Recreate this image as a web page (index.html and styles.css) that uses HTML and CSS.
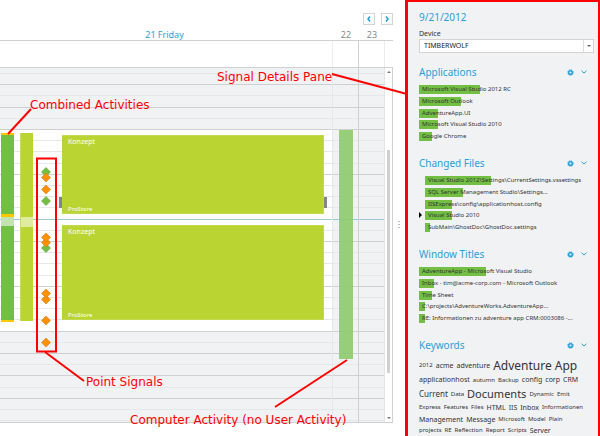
FILE: index.html
```html
<!DOCTYPE html>
<html lang="en">
<head>
<meta charset="utf-8">
<title>Activity calendar</title>
<link rel="stylesheet" href="styles.css">
</head>
<body>
<svg class="defs" width="0" height="0" aria-hidden="true">
  <symbol id="gear" viewBox="0 0 14 14">
    <circle cx="7" cy="7" r="3.6" fill="none" stroke="currentColor" stroke-width="3"/>
    <circle cx="7" cy="7" r="5.6" fill="none" stroke="currentColor" stroke-width="2" stroke-dasharray="2.2 2.2"/>
  </symbol>
  <symbol id="chevron" viewBox="0 0 6 4">
    <path d="M.5 .8 3 3 5.500 .8" fill="none" stroke="currentColor" stroke-width="1"/>
  </symbol>
</svg>
<div class="app">
  <main class="calendar">
    <nav class="pager">
      <button type="button" aria-label="Previous"><svg viewBox="0 0 4 6"><path d="M3 .5 1 3 3 5.500"/></svg></button>
      <button type="button" aria-label="Next"><svg viewBox="0 0 4 6"><path d="M1 .5 3 3 1 5.500"/></svg></button>
    </nav>
    <div class="days"><span class="today">21 Friday</span><span>22</span><span>23</span><i></i></div>
    <div class="allday"><i></i><i></i><i></i><i></i></div>
    <div class="timeline">
      <div class="board">
        <div class="hours">
          <i></i><i class="major"></i><i></i><i class="major"></i><i></i><i class="major"></i>
          <i class="work"></i><i class="work"></i><i class="work"></i><i class="work major"></i>
          <i class="work"></i><i class="work"></i><i class="work"></i><i class="work now"></i>
          <i class="work"></i><i class="work major"></i><i class="work"></i><i class="work"></i>
          <i class="work"></i><i class="work major"></i><i class="work"></i><i class="work"></i>
          <i class="work"></i><i class="work major"></i><i></i><i class="major"></i><i></i><i class="major"></i>
          <i></i><i class="major"></i><i></i><i></i>
        </div>
        <div class="columns"><i></i><i></i><i></i></div>
        <div class="track combined"><i class="edge"></i><i class="am"></i><i class="edge rest"></i><i class="pause"></i><i class="pm"></i><i class="edge"></i></div>
        <div class="track user"><i class="am"></i><i class="pause"></i><i class="pm"></i></div>
        <div class="event morning"><span>Konzept</span><small>ProStore</small></div>
        <div class="event afternoon"><span>Konzept</span><small>ProStore</small></div>
        <div class="handle start"></div>
        <div class="handle end"></div>
        <div class="computer"></div>
        <svg class="signals" viewBox="0 0 10 190" width="10" height="190">
          <g class="ok"><path d="M5 5.500 9.500 10 5 14.500 .5 10z"/><path d="M5 34.500 9.500 39 5 43.500 .5 39z"/><path d="M5 81.500 9.500 86 5 90.500 .5 86z"/></g>
          <g class="warn"><path d="M5 11 9.500 15.500 5 20 .5 15.500z"/><path d="M5 23 9.500 27.500 5 32 .5 27.500z"/><path d="M5 76 9.500 80.500 5 85 .5 80.500z"/><path d="M5 71 9.500 75.500 5 80 .5 75.500z"/><path d="M5 133 9.500 137.500 5 142 .5 137.500z"/><path d="M5 127 9.500 131.500 5 136 .5 131.500z"/><path d="M5 154 9.500 158.500 5 163 .5 158.500z"/><path d="M5 176 9.500 180.500 5 185 .5 180.500z"/></g>
        </svg>
      </div>
      <div class="scrollbar"><b class="up"></b><b class="thumb"></b><b class="down"></b></div>
    </div>
  </main>
  <div class="splitter"><i></i><i></i><i></i></div>
  <aside class="pane">
    <h1>9/21/2012</h1>
    <label for="device">Device</label>
    <div class="select"><select id="device"><option>TIMBERWOLF</option></select><b></b></div>
    <section>
      <header><h2>Applications</h2><button type="button" aria-label="Settings"><svg class="gear"><use href="#gear"/></svg></button><button type="button" aria-label="Collapse"><svg class="chevron"><use href="#chevron"/></svg></button></header>
      <ul>
        <li><b style="width:61px"></b><span>Microsoft Visual Studio 2012 RC</span></li>
        <li><b style="width:42px"></b><span>Microsoft Outlook</span></li>
        <li><b style="width:19px"></b><span>AdventureApp.UI</span></li>
        <li><b style="width:19px"></b><span>Microsoft Visual Studio 2010</span></li>
        <li><b style="width:13px"></b><span>Google Chrome</span></li>
      </ul>
    </section>
    <section>
      <header><h2>Changed Files</h2><button type="button" aria-label="Settings"><svg class="gear"><use href="#gear"/></svg></button><button type="button" aria-label="Collapse"><svg class="chevron"><use href="#chevron"/></svg></button></header>
      <ul class="tree">
        <li><b style="width:66px"></b><span>Visual Studio 2012\Settings\CurrentSettings.vssettings</span></li>
        <li><b style="width:38px"></b><span>SQL Server Management Studio\Settings...</span></li>
        <li><b style="width:27px"></b><span>IISExpress\config\applicationhost.config</span></li>
        <li class="closed"><b style="width:27px"></b><span>Visual Studio 2010</span></li>
        <li><b style="width:5px"></b><span>SubMain\GhostDoc\GhostDoc.settings</span></li>
      </ul>
    </section>
    <section>
      <header><h2>Window Titles</h2><button type="button" aria-label="Settings"><svg class="gear"><use href="#gear"/></svg></button><button type="button" aria-label="Collapse"><svg class="chevron"><use href="#chevron"/></svg></button></header>
      <ul>
        <li><b style="width:67px"></b><span>AdventureApp - Microsoft Visual Studio</span></li>
        <li><b style="width:15px"></b><span>Inbox - tim@acme-corp.com - Microsoft Outlook</span></li>
        <li><b style="width:13px"></b><span>Time Sheet</span></li>
        <li><b style="width:6px"></b><span>C:\projects\AdventureWorks.AdventureApp...</span></li>
        <li><b style="width:6px"></b><span>RE: Informationen zu adventure app CRM:0003086 -...</span></li>
      </ul>
    </section>
    <section>
      <header><h2>Keywords</h2><button type="button" aria-label="Settings"><svg class="gear"><use href="#gear"/></svg></button><button type="button" aria-label="Collapse"><svg class="chevron"><use href="#chevron"/></svg></button></header>
      <div class="cloud">
        <p><span>2012</span><span class="m">acme</span><span class="m">adventure</span><span class="xl">Adventure App</span></p>
        <p><span class="m">applicationhost</span><span>autumn</span><span>Backup</span><span class="m">config</span><span class="m">corp</span><span class="m">CRM</span></p>
        <p><span class="l">Current</span><span>Data</span><span class="xl2">Documents</span><span>Dynamic</span><span>Emit</span></p>
        <p><span>Express</span><span>Features</span><span>Files</span><span class="m">HTML</span><span class="m">IIS</span><span class="m">Inbox</span><span>Informationen</span></p>
        <p><span class="m">Management</span><span class="m">Message</span><span>Microsoft</span><span>Model</span><span>Plain</span></p>
        <p><span>projects</span><span>RE</span><span>Reflection</span><span>Report</span><span>Scripts</span><span class="m">Server</span></p>
      </div>
    </section>
  </aside>
  <svg class="callouts" width="600" height="436" viewBox="0 0 600 436" aria-hidden="true">
    <path d="M8 134 31 109M332 74 407 94M45 352 84 381M275 407 347 360"/>
    <rect x="37" y="158.500" width="19" height="193"/>
  </svg>
  <span class="note note-combined">Combined Activities</span>
  <span class="note note-pane">Signal Details Pane</span>
  <span class="note note-points">Point Signals</span>
  <span class="note note-computer">Computer Activity (no User Activity)</span>
</div>
</body>
</html>
```
FILE: styles.css
```css
* { box-sizing: border-box; }
body, h1, h2, ul, p { margin: 0; padding: 0; font-weight: normal; }
body { background: #fff; font-family: "Noto Sans", "Open Sans", sans-serif; font-size: 6px; color: #333; }
button { border: 0; padding: 0; background: none; color: #2a9fd6; display: flex; align-items: center; justify-content: center; }
.defs { position: absolute; }
.app { position: relative; display: grid; grid-template-columns: 1fr 12px 195px; min-height: 100vh; overflow: hidden; }

/* Calendar */
.calendar { display: flex; flex-direction: column; padding-top: 13px; border-bottom: 1px solid #ddd; min-width: 0; }
.pager { display: flex; justify-content: flex-end; gap: 6px; height: 12px; }
.pager button { width: 12px; height: 12px; border: 1px solid #d4d4d4; background: #fff; }
.pager svg { width: 4px; height: 6px; fill: none; stroke: #1f9bd4; stroke-width: 1.5; }
.days, .allday { display: grid; grid-template-columns: 1fr 26px 26px 8px; }
.days { height: 16px; padding-top: 4px; line-height: 11px; font-size: 9px; text-align: center; color: #888; border-bottom: 1px solid #d0d0d2; }
.days .today { color: #2a9fd6; padding-right: 4px; }
.allday { height: 26px; }
.allday i { border-right: 1px solid #ececee; }
.allday i:nth-child(2) { border-color: #d0d0d2; }
.allday i:last-child { border: 0; }
.timeline { display: grid; grid-template-columns: 1fr 7px; height: 356px; border: 1px solid #d0d0d2; border-left: 0; }
.board { position: relative; overflow: hidden; background: #f1f2f4; border-right: 1px solid #e4e4e6; }
.hours { display: grid; grid-template-rows: 6px; grid-auto-rows: 11px 11px 12px 11px 11px; height: 354px; overflow: hidden; }
.hours i { border-bottom: 1px solid #e6e7e9; }
.hours .work { background: linear-gradient(to left, #f1f2f4 52px, #fff 52px); }
.hours .major { border-color: #cfd0d2; }
.hours .now { border-color: #9cc9d6; }
.columns { position: absolute; inset: 0; display: grid; grid-template-columns: 1fr 26px 25px; }
.columns i { border-right: 1px solid #e6e7e9; }
.columns i:nth-child(2) { border-color: #cfd0d2; }
.columns i:last-child { border: 0; }
.track { position: absolute; top: 65px; width: 13px; display: flex; flex-direction: column; }
.combined { left: 1px; }
.combined .edge { height: 2px; background: #ffc800; }
.combined .rest { height: 3px; }
.am { height: 79px; }
.pm { height: 94px; }
.pause { height: 9px; }
.combined .am, .combined .pm { background: #72bf44; }
.combined .pause { background: #c3e3b2; }
.user { left: 20px; border-left: 1px solid #c6dc60; }
.user .am { height: 84px; }
.user .pause { height: 10px; }
.user .am, .user .pm { background: #bad532; }
.user .pause { background: #dfeba0; }
.event { position: absolute; left: 62px; right: 60px; display: flex; flex-direction: column; justify-content: space-between; padding: 0 6px; background: #bad532; border: 1px solid #c3da50; border-left: 0; color: #fff; line-height: 11px; font-size: 7px; }
.event small { font-size: 6px; line-height: 7px; }
.morning { top: 67px; height: 79px; }
.afternoon { top: 157px; height: 95px; }
.handle { position: absolute; top: 129px; width: 3px; height: 11px; background: #858585; }
.handle.start { left: 59px; }
.handle.end { right: 57px; }
.computer { position: absolute; top: 62px; right: 31px; width: 14px; height: 229px; background: #8ccb69; opacity: .9; }
.signals { position: absolute; left: 41px; top: 94px; }
.signals .ok { fill: #72bf44; stroke: #58a636; stroke-width: .6; }
.signals .warn { fill: #ff9100; stroke: #d27d10; stroke-width: .6; }
.scrollbar { display: flex; flex-direction: column; align-items: center; padding: 3px 0; }
.up { border: 2px solid transparent; border-top: 0; border-bottom-color: #777; }
.down { border: 2px solid transparent; border-bottom: 0; border-top-color: #777; margin-top: auto; }
.thumb { width: 3px; flex: none; margin-top: 77px; height: 223px; background: #d0d0d0; }
.splitter { display: flex; flex-direction: column; align-items: center; justify-content: center; gap: 2px; }
.splitter i { width: 2px; height: 1px; background: #bbb; }

/* Details pane */
.pane { border: 2px solid #f00; border-left-width: 3px; background: #f1f2f4; padding: 7px 4px 0 11px; min-width: 0; overflow: hidden; }
h1, h2 { font-size: 10px; color: #2a9fd6; }
h1 { line-height: 17px; }
.pane label { display: block; font-size: 7px; line-height: 11px; margin-top: 2px; }
.select { position: relative; height: 14px; border: 1px solid #d4d4d4; background: #fff; }
.select select { appearance: none; display: block; width: 100%; height: 12px; border: 0; padding: 0 4px; background: none; font: 7px/12px "Noto Sans", sans-serif; color: #222; }
.select b { position: absolute; right: 0; top: 0; width: 10px; height: 12px; border-left: 1px solid #ddd; pointer-events: none; }
.select b::after { content: ""; position: absolute; left: 3px; top: 5px; border: 2px solid transparent; border-bottom: 0; border-top-color: #666; }
.select + section { margin-top: 12px; }
section { margin-bottom: 12px; }
section header { display: flex; align-items: center; height: 14px; margin-bottom: 6px; padding-right: 7px; gap: 7px; }
h2 { flex: 1; line-height: 14px; }
.gear { width: 7px; height: 7px; }
.chevron { width: 6px; height: 4px; }
ul { list-style: none; display: grid; grid-template-rows: 12px 12px 11px 12px 12px; }
.tree { padding-left: 6px; }
li { position: relative; display: grid; align-items: start; height: 9px; line-height: 9px; white-space: nowrap; }
li b { grid-area: 1 / 1; height: 9px; background: #72bf44; }
li span { grid-area: 1 / 1; position: relative; padding-left: 3px; }
.closed::before { content: ""; position: absolute; left: -6px; top: 1px; border: 3px solid transparent; border-right: 0; border-left-color: #000; }
.cloud { display: grid; grid-template-rows: 16px 13px 15px 12px 12px 10px; margin-top: -1px; }
.cloud p { display: flex; align-items: center; gap: 3px; white-space: nowrap; }
.cloud .m { font-size: 7px; }
.cloud .l { font-size: 8px; }
.cloud .xl { font-size: 12px; }
.cloud .xl2 { font-size: 11px; }

/* Annotations over the window */
.callouts { position: absolute; left: 0; top: 0; fill: none; stroke: #f00; stroke-width: 2; pointer-events: none; }
.note { position: absolute; font: 12px/14px "DejaVu Sans", sans-serif; color: #f00; white-space: nowrap; }
.note-combined { left: 30px; top: 98px; }
.note-pane { left: 217px; top: 70px; }
.note-points { left: 86px; top: 375px; }
.note-computer { left: 130px; top: 413px; }
```
